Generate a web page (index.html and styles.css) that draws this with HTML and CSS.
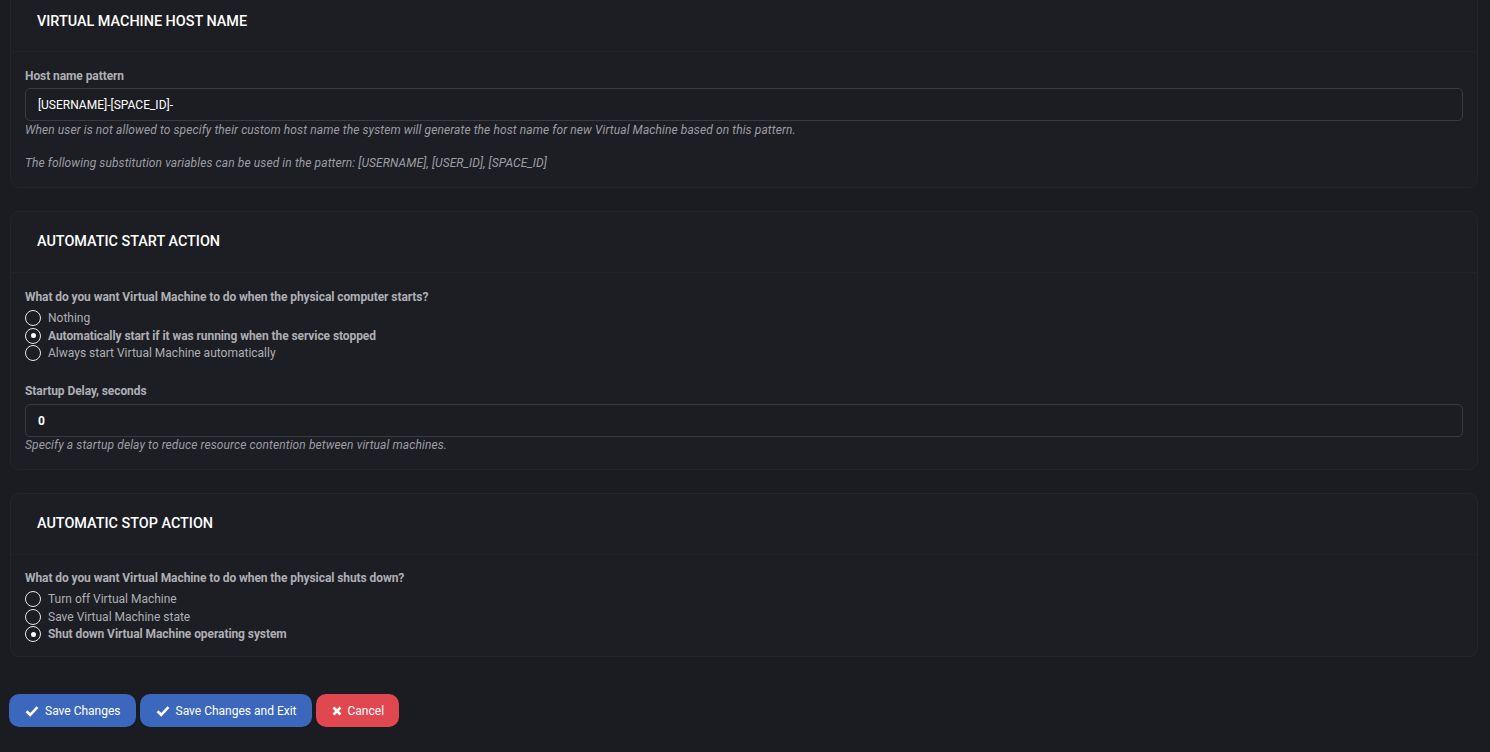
FILE: index.html
```html
<!DOCTYPE html>
<html>
<head>
<meta charset="utf-8">
<link rel="stylesheet" href="styles.css">
</head>
<body>
<div class="page">
  <section class="card">
    <div class="card-header">VIRTUAL MACHINE HOST NAME</div>
    <div class="card-body">
      <div class="label">Host name pattern</div>
      <div class="input">[USERNAME]-[SPACE_ID]-</div>
      <div class="help">When user is not allowed to specify their custom host name the system will generate the host name for new Virtual Machine based on this pattern.<br><br>The following substitution variables can be used in the pattern: [USERNAME], [USER_ID], [SPACE_ID]</div>
    </div>
  </section>

  <section class="card">
    <div class="card-header">AUTOMATIC START ACTION</div>
    <div class="card-body">
      <div class="label label-radio">What do you want Virtual Machine to do when the physical computer starts?</div>
      <div class="radios">
        <div class="radio"><span class="dot"></span><span>Nothing</span></div>
        <div class="radio checked"><span class="dot"></span><span>Automatically start if it was running when the service stopped</span></div>
        <div class="radio"><span class="dot"></span><span>Always start Virtual Machine automatically</span></div>
      </div>
      <div class="label label-gap">Startup Delay, seconds</div>
      <div class="input bold">0</div>
      <div class="help help-tight">Specify a startup delay to reduce resource contention between virtual machines.</div>
    </div>
  </section>

  <section class="card">
    <div class="card-header">AUTOMATIC STOP ACTION</div>
    <div class="card-body card-body-tight">
      <div class="label label-radio">What do you want Virtual Machine to do when the physical shuts down?</div>
      <div class="radios">
        <div class="radio"><span class="dot"></span><span>Turn off Virtual Machine</span></div>
        <div class="radio"><span class="dot"></span><span>Save Virtual Machine state</span></div>
        <div class="radio checked"><span class="dot"></span><span>Shut down Virtual Machine operating system</span></div>
      </div>
    </div>
  </section>

  <div class="actions">
    <button class="btn btn-blue"><svg class="ico" viewBox="0 0 14 14"><path d="M1.5 7.2 L5.2 10.8 L12.5 3.2" fill="none" stroke="#fff" stroke-width="2.6"/></svg>Save Changes</button>
    <button class="btn btn-blue"><svg class="ico" viewBox="0 0 14 14"><path d="M1.5 7.2 L5.2 10.8 L12.5 3.2" fill="none" stroke="#fff" stroke-width="2.6"/></svg>Save Changes and Exit</button>
    <button class="btn btn-red"><svg class="ico small" viewBox="0 0 10 10"><path d="M1.5 1.5 L8.5 8.5 M8.5 1.5 L1.5 8.5" fill="none" stroke="#fff" stroke-width="2.6"/></svg>Cancel</button>
  </div>
</div>
</body>
</html>
```

FILE: styles.css
```css
* { box-sizing: border-box; }
html, body { margin: 0; padding: 0; background: #1b1c21; }
body {
  font-family: Roboto, "Liberation Sans", Arial, sans-serif;
  font-size: 12px;
  color: #aeafb4;
  overflow: hidden;
}
.page {
  margin-top: -10px;
  padding: 0 12px 0 10px;
  display: flex;
  flex-direction: column;
  gap: 23px;
}
.card {
  background: #1d1e23;
  border: 1px solid #24252a;
  border-radius: 9px;
}
.card-header {
  height: 61px;
  padding: 0 0 0 26px;
  display: flex;
  align-items: center;
  font-size: 14.4px;
  font-weight: 500;
  color: #ffffff;
  border-bottom: 1px solid #222328;
}
.card-body {
  padding: 16px 14px 15px 14px;
}
.card-body-tight { padding-top: 15px; padding-bottom: 13px; }
.label {
  font-weight: 700;
  color: #aeafb4;
  line-height: 17px;
  margin-bottom: 3px;
  letter-spacing: -0.08px;
}
.label-radio { margin-top: 0; margin-bottom: 4px; }
.label-gap { margin-top: 21px; margin-bottom: 4px; }
.input {
  height: 33px;
  border: 1px solid #3a3b41;
  border-radius: 5px;
  background: #1c1d22;
  padding: 0 12px;
  display: flex;
  align-items: center;
  color: #ffffff;
  font-size: 12px;
}
.input.bold { font-weight: 700; }
.help {
  font-style: italic;
  color: #9c9da3;
  line-height: 16.5px;
  margin-top: 1px;
  letter-spacing: 0.1px;
}
.help-tight { margin-top: 0; }
.radios {
  display: flex;
  flex-direction: column;
}
.radio {
  display: flex;
  align-items: center;
  gap: 7px;
  height: 17.5px;
  color: #aeafb4;
}
.radio.checked { font-weight: 700; letter-spacing: -0.08px; }
.dot {
  width: 16px;
  height: 16px;
  border: 1.5px solid #e8e8ea;
  border-radius: 50%;
  display: inline-flex;
  align-items: center;
  justify-content: center;
  flex: none;
}
.radio.checked .dot::after {
  content: "";
  width: 5px;
  height: 5px;
  border-radius: 50%;
  background: #ffffff;
}
.actions {
  display: flex;
  gap: 4px;
  margin-top: 14px;
  margin-left: -1px;
}
.btn {
  height: 33px;
  border: none;
  border-radius: 10px;
  color: #ffffff;
  font-family: Roboto, "Liberation Sans", Arial, sans-serif;
  font-size: 12px;
  padding: 0 15px 0 16px;
  display: inline-flex;
  align-items: center;
  gap: 6px;
  box-shadow: 0 1px 1px rgba(0,0,0,0.35);
}
.btn-blue { background: #3b67bd; }
.btn-red { background: #e1474f; }
.ico { width: 14px; height: 14px; }
.ico.small { width: 10px; height: 10px; }
```
